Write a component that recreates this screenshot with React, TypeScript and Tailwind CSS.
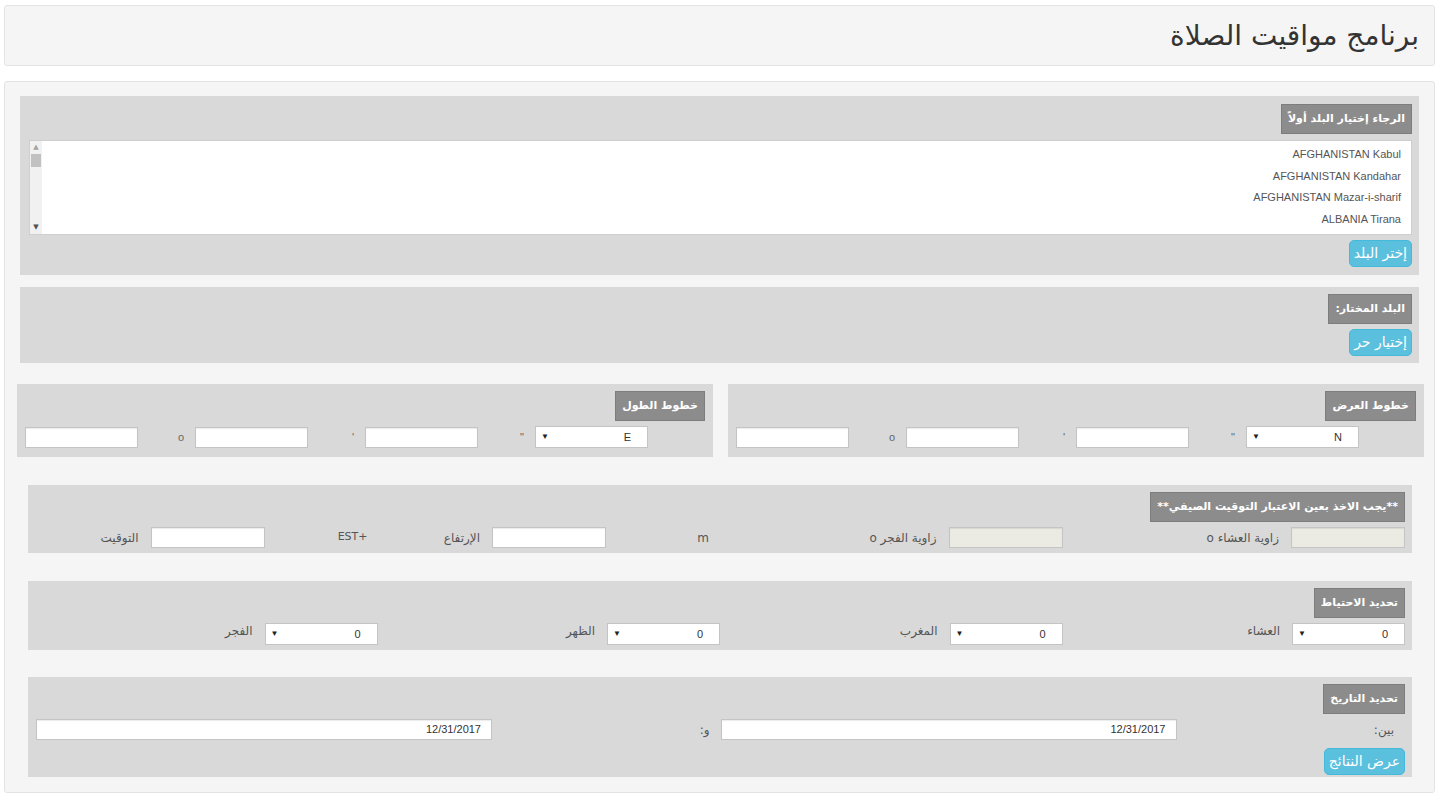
const AR = "font-['DejaVu_Sans',sans-serif]";
const LAT = "font-['Liberation_Sans',Arial,sans-serif]";

const cities = [
  "AFGHANISTAN Kabul",
  "AFGHANISTAN Kandahar",
  "AFGHANISTAN Mazar-i-sharif",
  "ALBANIA Tirana",
];

function Badge({ children }: { children: React.ReactNode }) {
  return (
    <div className="flex">
      <span
        className={`flex h-[30px] items-center border border-[#7d7d7d] bg-[#8c8c8c] px-[6px] text-[11px] font-bold tracking-[-0.2px] text-white ${AR}`}
      >
        {children}
      </span>
    </div>
  );
}

function InfoButton({ children }: { children: React.ReactNode }) {
  return (
    <div className="flex">
      <button
        type="button"
        className={`flex h-[27px] items-center rounded-[5px] border border-[#46b8da] bg-[#5bc0de] px-[4px] pb-[2px] text-[14px] leading-[20px] text-white ${AR}`}
      >
        {children}
      </button>
    </div>
  );
}

function TextBox({
  w = 113,
  value = "",
  disabled = false,
}: {
  w?: number;
  value?: string;
  disabled?: boolean;
}) {
  return (
    <div
      className={`flex h-[21px] shrink-0 items-center justify-start border border-[#c4c4c4] px-[10px] text-[11px] text-[#333] shadow-[inset_0_1px_1px_rgba(0,0,0,0.08)] ${LAT} ${
        disabled ? "bg-[#ebebe4]" : "bg-white"
      }`}
      style={{ width: w }}
    >
      {value}
    </div>
  );
}

function SelectBox({ value }: { value: string }) {
  return (
    <div
      className={`flex h-[22px] w-[113px] shrink-0 items-center justify-between border border-[#c4c4c4] bg-white pl-[5px] pr-[16px] text-[11px] text-[#333] ${LAT}`}
    >
      <span>{value}</span>
      <span className="text-[8px] text-[#222]">▼</span>
    </div>
  );
}

function Label({ children, className = "" }: { children: React.ReactNode; className?: string }) {
  return <span className={`text-[12px] text-[#555] ${AR} ${className}`}>{children}</span>;
}

// one coordinate panel: hemisphere select + deg/min/sec boxes
function CoordPanel({ title, hemi }: { title: string; hemi: string }) {
  const marks = ['"', "'", "o"];
  return (
    <div className="flex w-[696px] flex-col gap-[5px] bg-[#d9d9d9] pb-[9px] pl-[7px] pr-[8px] pt-[7px]">
      <Badge>{title}</Badge>
      <div className="flex items-center pr-[57px]">
        <SelectBox value={hemi} />
        {marks.map((m) => (
          <div key={m} className="flex items-center">
            <span className={`flex w-[57px] justify-start pr-[11px] text-[11px] text-[#666] ${LAT}`}>{m}</span>
            <TextBox />
          </div>
        ))}
      </div>
    </div>
  );
}

export default function App() {
  return (
    <div dir="rtl" className={`min-h-[810px] bg-white pb-[15px] pl-[4px] pr-[5px] pt-[5px] ${AR}`}>
      <div className="flex h-[61px] items-center rounded-[3px] border border-[#e3e3e3] bg-[#f5f5f5] pr-[15px]">
        <h1 className={`text-[28px] font-normal text-[#333] ${AR}`}>برنامج مواقيت الصلاة</h1>
      </div>

      <div className="mt-[15px] flex flex-col rounded-[3px] border border-[#e3e3e3] bg-[#f5f5f5] px-[15px] pb-[15px] pt-[14px]">
        {/* city list */}
        <div className="flex flex-col bg-[#d9d9d9] pb-[8px] pl-[9px] pr-[7px] pt-[8px]">
          <Badge>الرجاء إختيار البلد أولاً</Badge>
          <div className="mt-[6px] flex h-[95px] border border-[#cfcfcf] bg-white">
            <div className={`flex-1 pr-[10px] pt-[3px] text-[11px] leading-[21.5px] text-[#555] ${LAT}`}>
              {cities.map((c) => (
                <div key={c} dir="ltr" className="text-right">
                  {c}
                </div>
              ))}
            </div>
            <div className="flex w-[12px] flex-col items-center bg-[#f1f1f1]">
              <span className="mt-[2px] text-[7px] leading-[8px] text-[#a3a3a3]">▲</span>
              <span className="mt-[3px] h-[13px] w-[10px] bg-[#c1c1c1]" />
              <span className="flex-1" />
              <span className="mb-[3px] text-[7px] leading-[8px] text-[#505050]">▼</span>
            </div>
          </div>
          <div className="mt-[5px]">
            <InfoButton>إختر البلد</InfoButton>
          </div>
        </div>

        {/* selected city */}
        <div className="mt-[12px] flex flex-col gap-[5px] bg-[#d9d9d9] px-[7px] py-[7px]">
          <Badge>البلد المختار:</Badge>
          <InfoButton>إختيار حر</InfoButton>
        </div>

        {/* latitude / longitude */}
        <div className="-ml-[3px] -mr-[5px] mt-[21px] flex justify-between">
          <CoordPanel title="خطوط العرض" hemi="N" />
          <CoordPanel title="خطوط الطول" hemi="E" />
        </div>

        {/* angles, altitude, timezone */}
        <div className="ml-[8px] mr-[7px] mt-[28px] flex flex-col gap-[5px] bg-[#d9d9d9] pb-[5px] pl-[7px] pr-[7px] pt-[7px]">
          <Badge>**يجب الاخذ بعين الاعتبار التوقيت الصيفي**</Badge>
          <div className="flex items-center">
            <div className="flex w-[343px] items-center gap-[12px]">
              <TextBox w={114} disabled />
              <Label>زاوية العشاء o</Label>
            </div>
            <div className="flex w-[343px] items-center gap-[12px]">
              <TextBox w={114} disabled />
              <Label>زاوية الفجر o</Label>
            </div>
            <div className="flex w-[343px] items-center">
              <span className={`w-[114px] pr-[11px] text-[12px] text-[#555] ${AR}`}>m</span>
              <TextBox w={114} />
              <Label className="mr-[12px]">الإرتفاع</Label>
            </div>
            <div className="flex w-[343px] items-center">
              <span className={`w-[113px] pr-[10px] text-[11px] text-[#555] ${AR}`}>+EST</span>
              <TextBox w={114} />
              <Label className="mr-[12px]">التوقيت</Label>
            </div>
          </div>
        </div>

        {/* safety offsets */}
        <div className="ml-[8px] mr-[7px] mt-[28px] flex flex-col gap-[5px] bg-[#d9d9d9] pb-[5px] pl-[7px] pr-[7px] pt-[7px]">
          <Badge>تحديد الاحتياط</Badge>
          <div className="flex items-center">
            {["العشاء", "المغرب", "الظهر", "الفجر"].map((p) => (
              <div key={p} className="flex w-[343px] items-center gap-[12px]">
                <SelectBox value="0" />
                <Label className="-mt-[6px]">{p}</Label>
              </div>
            ))}
          </div>
        </div>

        {/* date range */}
        <div className="ml-[8px] mr-[7px] mt-[27px] flex flex-col bg-[#d9d9d9] pb-[2px] pl-[8px] pr-[7px] pt-[7px]">
          <Badge>تحديد التاريخ</Badge>
          <div className="mt-[5px] flex items-center">
            <Label className="w-[229px] pr-[11px]">بين:</Label>
            <TextBox w={456} value="12/31/2017" />
            <Label className="w-[229px] pr-[11px]">و:</Label>
            <TextBox w={456} value="12/31/2017" />
          </div>
          <div className="mt-[8px]">
            <InfoButton>عرض النتائج</InfoButton>
          </div>
        </div>
      </div>
    </div>
  );
}
